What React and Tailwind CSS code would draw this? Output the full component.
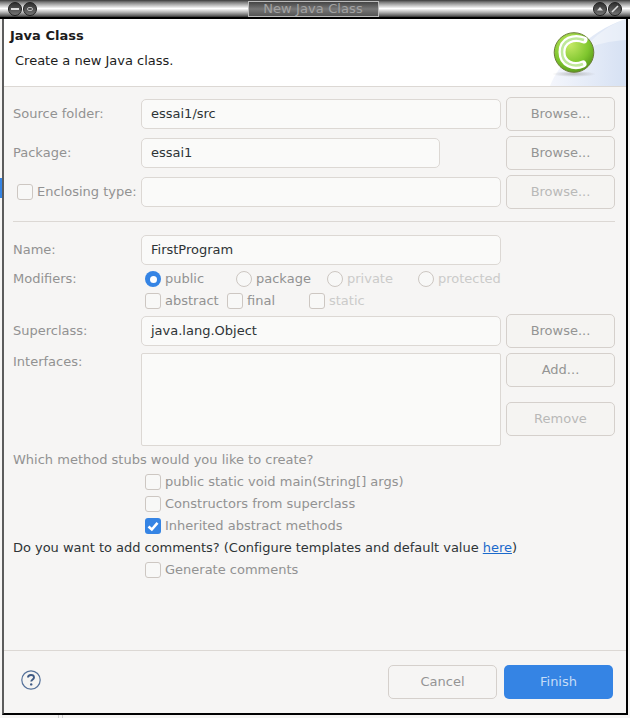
import React from "react";

const WmButton = ({ children }) => (
  <svg width="14" height="14" viewBox="0 0 14 14">
    <defs>
      <linearGradient id="wm" x1="0" y1="0" x2="0" y2="1">
        <stop offset="0" stopColor="#2c2c2c" />
        <stop offset="1" stopColor="#777" />
      </linearGradient>
    </defs>
    <circle cx="7" cy="7" r="6.5" fill="url(#wm)" stroke="#222" />
    {children}
  </svg>
);

const TitleBar = () => (
  <div className="flex h-[19px] shrink-0 items-center justify-between border-b-2 border-black bg-[linear-gradient(to_bottom,#3a3a3a_0%,#777_12%,#a8a8a8_25%,#fff_50%,#b5b5b5_72%,#6a6a6a_90%,#333_100%)]">
    <div className="flex gap-px pl-2">
      <WmButton><rect x="3" y="6" width="8" height="2" fill="#ddd" /></WmButton>
      <WmButton><rect x="4.5" y="5.5" width="5" height="3" rx="1.5" fill="none" stroke="#bbb" /></WmButton>
    </div>
    <div className="mr-[4px] flex h-[16px] w-[131px] items-center justify-center border border-[#bbb] bg-[linear-gradient(to_bottom,#444,#777_50%,#555)] font-['DejaVu_Sans',sans-serif] text-[13px] tracking-[0.1px] text-[#a2a2a2]">
      New Java Class
    </div>
    <div className="flex gap-px pr-2">
      <WmButton><path d="M4 8.5 L7 5 L10 8.5 Z" fill="#ddd" /></WmButton>
      <WmButton><path d="M4 10 L10 4" stroke="#ddd" strokeWidth="1.6" /></WmButton>
    </div>
  </div>
);

const Banner = () => (
  <div className="relative h-[68px] shrink-0 border-b border-[#dcd8d4] bg-white">
    <svg className="absolute bottom-0 right-0" width="78" height="67" viewBox="0 0 78 67">
      <defs>
        <linearGradient id="wash" x1="0" y1="0" x2="1" y2="0">
          <stop offset="0" stopColor="#f4f6fc" />
          <stop offset="1" stopColor="#d6e1f3" />
        </linearGradient>
        <radialGradient id="ball" cx="0.4" cy="0.3" r="0.8">
          <stop offset="0" stopColor="#c6ea66" />
          <stop offset="0.6" stopColor="#7fc62e" />
          <stop offset="1" stopColor="#4c8c14" />
        </radialGradient>
        <radialGradient id="shadow">
          <stop offset="0" stopColor="#9a9a9a" stopOpacity="0.6" />
          <stop offset="1" stopColor="#9a9a9a" stopOpacity="0" />
        </radialGradient>
      </defs>
      <path d="M2 67 C10 45 40 12 78 0 L78 67 Z" fill="url(#wash)" />
      <path d="M35 31 C48 25 62 22 78 21 L78 0 C62 5 46 17 35 31 Z" fill="#fff" opacity="0.4" />
      <ellipse cx="26" cy="55" rx="22" ry="3" fill="url(#shadow)" />
      <circle cx="26" cy="33.5" r="19.8" fill="url(#ball)" stroke="#6d7d3a" strokeWidth="1" />
      <path d="M36 21 C26 17 14 21 14 33 C14 45 26 49 35 45" fill="none" stroke="#fff" strokeWidth="7" strokeLinecap="round" />
      <path d="M36 21 C26 17 14 21 14 33 C14 45 26 49 35 45" fill="none" stroke="#bfe89a" strokeWidth="2.5" />
    </svg>
    <p className="absolute left-1.5 top-[8px] text-[13px] font-bold leading-[18px] text-[#1c1c1c]">Java Class</p>
    <p className="absolute left-[11px] top-[33px] text-[13px] leading-[18px] text-[#1c1c1c]">Create a new Java class.</p>
  </div>
);

const Browse = ({ label = "Browse...", muted }) => (
  <div
    className={`flex h-[34px] w-[109px] items-center justify-center rounded-[5px] border border-[#d5d0cc] bg-[#f5f4f2] ${
      muted ? "text-[#b9b9b8]" : "text-[#949494]"
    }`}
  >
    {label}
  </div>
);

const Input = ({ value, w = "w-[360px]", h = "h-[30px]" }) => (
  <div className={`flex shrink-0 items-center rounded-[5px] border border-[#dcd8d4] bg-[#fafaf9] pl-[9px] text-[#2e3436] ${w} ${h}`}>
    {value}
  </div>
);

const FieldRow = ({ label, value, w, button = true, className = "" }) => (
  <div className={`flex h-[34px] items-center ${className}`}>
    <span className="w-[128px] shrink-0 text-[#929292]">{label}</span>
    <Input value={value} w={w} />
    {button && <div className="ml-auto"><Browse /></div>}
  </div>
);

const Check = ({ checked }) =>
  checked ? (
    <span className="flex h-4 w-4 shrink-0 items-center justify-center rounded-[3px] bg-[#3584e4]">
      <svg width="14" height="14" viewBox="0 0 14 14">
        <path d="M2.5 7.5 L5.8 10.5 L11.5 3.8" fill="none" stroke="#fff" strokeWidth="2.6" />
      </svg>
    </span>
  ) : (
    <span className="h-4 w-4 shrink-0 rounded-[3px] border border-[#cdc7c2] bg-[#f8f8f7]" />
  );

const Radio = ({ checked }) =>
  checked ? (
    <span className="flex h-4 w-4 shrink-0 items-center justify-center rounded-full bg-[#3584e4]">
      <span className="h-[7px] w-[7px] rounded-full bg-white" />
    </span>
  ) : (
    <span className="h-4 w-4 shrink-0 rounded-full border border-[#cdc7c2] bg-[#f8f8f7]" />
  );

const Option = ({ label, mark, faint, className = "" }) => (
  <div className={`flex h-[22px] items-center gap-1 ${faint ? "text-[#cbcbca]" : "text-[#929292]"} ${className}`}>
    {mark}
    <span>{label}</span>
  </div>
);

const Form = () => (
  <div className="flex-1 pl-[9px] pr-[11px] pt-[10px]">
    <div className="flex flex-col gap-[5px]">
      <FieldRow label="Source folder:" value="essai1/src" />
      <FieldRow label="Package:" value="essai1" w="w-[299px]" />
      <div className="flex h-[34px] items-center">
        <div className="flex w-[128px] shrink-0 items-center gap-1 pl-1 text-[#929292]">
          <Check />
          <span className="whitespace-nowrap">Enclosing type:</span>
        </div>
        <Input w="w-[360px]" />
        <div className="ml-auto"><Browse muted /></div>
      </div>
    </div>

    <div className="mt-[12px] h-px bg-[#dcd8d4]" />

    <FieldRow label="Name:" value="FirstProgram" button={false} className="mt-[11px]" />

    <div className="mt-px flex h-[22px] items-center">
      <span className="w-[132px] shrink-0 text-[#929292]">Modifiers:</span>
      <div className="grid grid-cols-[91px_91px_91px_91px]">
        <Option label="public" mark={<Radio checked />} />
        <Option label="package" mark={<Radio />} />
        <Option label="private" mark={<Radio />} faint />
        <Option label="protected" mark={<Radio />} faint />
      </div>
    </div>
    <div className="grid grid-cols-[82px_82px_82px] pl-[132px]">
      <Option label="abstract" mark={<Check />} />
      <Option label="final" mark={<Check />} />
      <Option label="static" mark={<Check />} faint />
    </div>

    <FieldRow label="Superclass:" value="java.lang.Object" className="mt-[2px]" />

    <div className="mt-[5px] flex">
      <span className="w-[128px] shrink-0 leading-[17px] text-[#929292]">Interfaces:</span>
      <div className="h-[93px] w-[360px] shrink-0 rounded-[2px] border border-[#dcd8d4] bg-[#fafaf9]" />
      <div className="ml-auto flex flex-col gap-[15px]">
        <Browse label="Add..." />
        <Browse label="Remove" muted />
      </div>
    </div>

    <div className="mt-[3px] flex h-[22px] items-center text-[#929292]">Which method stubs would you like to create?</div>
    <div className="pl-[132px]">
      <Option label="public static void main(String[] args)" mark={<Check />} />
      <Option label="Constructors from superclass" mark={<Check />} />
      <Option label="Inherited abstract methods" mark={<Check checked />} />
    </div>
    <div className="flex h-[22px] items-center whitespace-pre tracking-[-0.025px] text-[#2e3436]">
      Do you want to add comments? (Configure templates and default value{" "}
      <span className="text-[#1b6acb] underline">here</span>)
    </div>
    <div className="pl-[132px]">
      <Option label="Generate comments" mark={<Check />} />
    </div>
  </div>
);

const Footer = () => (
  <div className="flex h-[63px] shrink-0 items-start justify-between border-t border-[#dcd8d4] pl-[17px] pr-[13px] pt-[14px]">
    <svg className="mt-[5px]" width="20" height="20" viewBox="0 0 20 20">
      <circle cx="10" cy="10" r="9.2" fill="#f5f4f2" stroke="#56729a" strokeWidth="1.2" />
      <path d="M7 7.6 C7 5.6 8.5 5 10 5 C11.8 5 13 6 13 7.4 C13 9.4 10.2 9.4 10.2 11.6" fill="none" stroke="#3f5a84" strokeWidth="1.9" />
      <circle cx="10.2" cy="14.4" r="1.2" fill="#3f5a84" />
    </svg>
    <div className="flex gap-[7px]">
      <div className="flex h-[34px] w-[109px] items-center justify-center rounded-[5px] border border-[#d5d0cc] text-[#949494]">Cancel</div>
      <div className="flex h-[34px] w-[109px] items-center justify-center rounded-[5px] bg-[#3584e4] text-[#c5dcf7]">Finish</div>
    </div>
  </div>
);

export default function App() {
  return (
    <div className="relative h-[718px] w-[630px] overflow-hidden bg-[#f6f5f4] font-['DejaVu_Sans',sans-serif] text-[13px]">
      <TitleBar />
      <span className="absolute left-0 top-[178px] h-[20px] w-[2px] bg-[#3584e4]" />
      <span className="absolute bottom-0 left-[58px] h-[3px] w-[5px] border-x border-[#cfcfcf]" />
      <div className="ml-[2px] flex h-[696px] w-[626px] flex-col border-b-2 border-l-2 border-r-2 border-b-black border-l-[#5c5c5c] border-r-black bg-[#f6f5f4]">
        <Banner />
        <Form />
        <Footer />
      </div>
    </div>
  );
}
